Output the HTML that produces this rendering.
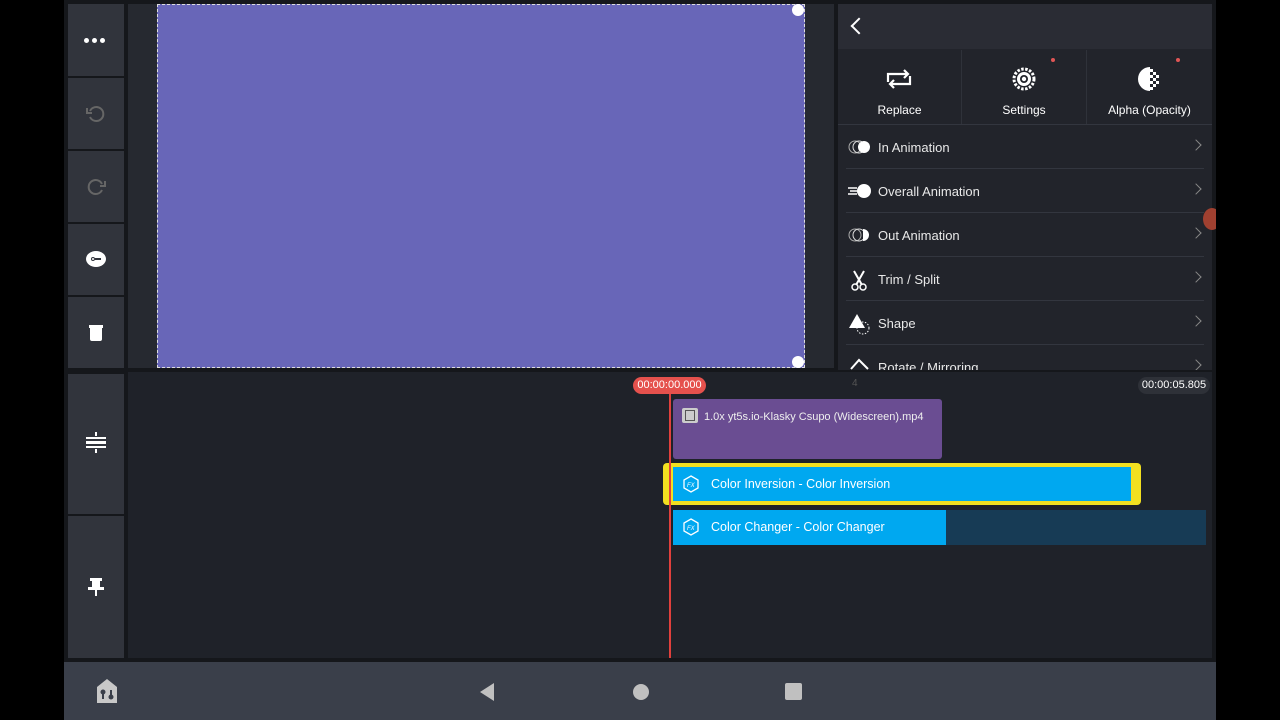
<!DOCTYPE html><html><head><style>
*{margin:0;padding:0;box-sizing:border-box}
body{width:1280px;height:720px;background:#000;position:relative;overflow:hidden;font-family:"Liberation Sans",sans-serif;color:#fff}
.a{position:absolute}
.tb{position:absolute;left:68px;width:56px;background:#31343c}
.row{position:absolute;left:838px;width:374px;height:44px;font-size:13px;color:#e8e8e8}
.row span{position:absolute;left:40px;top:15px}
.row i{position:absolute;right:12px;top:16px;width:8px;height:8px;border-right:1.5px solid #888;border-top:1.5px solid #888;transform:rotate(45deg)}
.row b{position:absolute;left:8px;right:8px;bottom:0;height:1px;background:#33363f}
</style></head><body>
<div class="a" style="left:64px;top:0;width:1152px;height:662px;background:#15171b"></div>
<div class="tb" style="top:4px;height:72px"><div class="a" style="left:16px;top:34px;font-size:0"><span style="display:inline-block;width:5px;height:5px;background:#fff;border-radius:50%;margin-right:3px"></span><span style="display:inline-block;width:5px;height:5px;background:#fff;border-radius:50%;margin-right:3px"></span><span style="display:inline-block;width:5px;height:5px;background:#fff;border-radius:50%"></span></div></div>
<div class="tb" style="top:78px;height:71px"><svg class="a" style="left:16px;top:24px" width="24" height="24" viewBox="0 0 24 24"><path d="M6 9a7 7 0 1 1 0 6" fill="none" stroke="#666" stroke-width="2"/><path d="M3 6v5h5" fill="none" stroke="#666" stroke-width="2"/></svg></div>
<div class="tb" style="top:151px;height:71px"><svg class="a" style="left:16px;top:24px" width="24" height="24" viewBox="0 0 24 24"><path d="M18 9a7 7 0 1 0 0 6" fill="none" stroke="#666" stroke-width="2"/><path d="M21 6v5h-5" fill="none" stroke="#666" stroke-width="2"/></svg></div>
<div class="tb" style="top:224px;height:71px"><div class="a" style="left:18px;top:27px;width:20px;height:16px;background:#fff;border-radius:50%"></div><div class="a" style="left:23px;top:33px;width:4px;height:4px;border:1.5px solid #31343c;border-radius:50%"></div><div class="a" style="left:27px;top:34px;width:6px;height:1.5px;background:#31343c"></div></div>
<div class="tb" style="top:297px;height:71px"><div class="a" style="left:21px;top:28px;width:14px;height:3px;background:#fff"></div><div class="a" style="left:22px;top:31px;width:12px;height:13px;background:#fff;border-radius:0 0 2px 2px"></div></div>
<div class="a" style="left:128px;top:4px;width:706px;height:364px;background:#262930"></div>
<div class="a" style="left:157px;top:4px;width:648px;height:364px;background:#6866b8;border:1px dashed #ddd"></div>
<div class="a" style="left:792px;top:4px;width:12px;height:12px;background:#fff;border-radius:50%"></div>
<div class="a" style="left:792px;top:356px;width:12px;height:12px;background:#fff;border-radius:50%"></div>
<div class="a" style="left:838px;top:4px;width:374px;height:366px;background:#22242b"></div>
<div class="a" style="left:838px;top:4px;width:374px;height:45px;background:#2a2c34"></div>
<div class="a" style="left:853px;top:20px;width:12px;height:12px;border-left:2px solid #fff;border-bottom:2px solid #fff;transform:rotate(45deg)"></div>
<div class="a" style="left:961px;top:50px;width:1px;height:74px;background:#2f323a"></div>
<div class="a" style="left:1086px;top:50px;width:1px;height:74px;background:#2f323a"></div>
<div class="a" style="left:838px;top:124px;width:374px;height:1px;background:#33363f"></div>
<svg class="a" style="left:884px;top:66px" width="30" height="26" viewBox="0 0 30 26"><path d="M4 16V8h20M20 4l4 4-4 4M26 10v8H6M10 22l-4-4 4-4" fill="none" stroke="#fff" stroke-width="2.2"/></svg>
<div class="a" style="left:838px;top:103px;width:123px;text-align:center;font-size:12px">Replace</div>
<svg class="a" style="left:1011px;top:66px" width="26" height="26" viewBox="0 0 26 26"><circle cx="13" cy="13" r="10" fill="none" stroke="#fff" stroke-width="3" stroke-dasharray="2.5 1.5"/><circle cx="13" cy="13" r="7" fill="#fff"/><circle cx="13" cy="13" r="4" fill="#22242b"/><circle cx="13" cy="13" r="2.2" fill="#fff"/></svg>
<div class="a" style="left:1051px;top:58px;width:4px;height:4px;border-radius:50%;background:#e05555"></div>
<div class="a" style="left:962px;top:103px;width:124px;text-align:center;font-size:12px">Settings</div>
<svg class="a" style="left:1137px;top:66px" width="26" height="26" viewBox="0 0 26 26"><path d="M13 1a12 12 0 0 0 0 24z" fill="#fff"/><g fill="#fff"><rect x="13" y="3" width="3" height="3"/><rect x="16" y="6" width="3" height="3"/><rect x="13" y="9" width="3" height="3"/><rect x="19" y="9" width="3" height="3"/><rect x="16" y="12" width="3" height="3"/><rect x="13" y="15" width="3" height="3"/><rect x="19" y="15" width="3" height="3"/><rect x="16" y="18" width="3" height="3"/><rect x="13" y="21" width="3" height="3"/></g></svg>
<div class="a" style="left:1176px;top:58px;width:4px;height:4px;border-radius:50%;background:#e05555"></div>
<div class="a" style="left:1087px;top:103px;width:125px;text-align:center;font-size:12px">Alpha (Opacity)</div>
<div class="row" style="top:125px"><svg class="a" style="left:10px;top:15px" width="24" height="14"><circle cx="7" cy="7" r="6" fill="none" stroke="#aaa"/><circle cx="11" cy="7" r="6" fill="none" stroke="#ddd"/><circle cx="16" cy="7" r="6" fill="#fff"/></svg><span>In Animation</span><i></i><b></b></div>
<div class="row" style="top:169px"><svg class="a" style="left:10px;top:14px" width="24" height="16"><path d="M0 5h9M2 8h8M0 11h9" stroke="#fff" stroke-width="1.5"/><circle cx="16" cy="8" r="7" fill="#fff"/></svg><span>Overall Animation</span><i></i><b></b></div>
<div class="row" style="top:213px"><svg class="a" style="left:10px;top:15px" width="24" height="14"><circle cx="7" cy="7" r="6" fill="none" stroke="#aaa"/><circle cx="11" cy="7" r="6" fill="none" stroke="#ddd"/><path d="M15 1a6 6 0 0 1 0 12z" fill="#fff"/></svg><span>Out Animation</span><i></i><b></b></div>
<div class="row" style="top:257px"><svg class="a" style="left:12px;top:12px" width="18" height="22"><path d="M4 2l8 14M14 2L6 16" stroke="#fff" stroke-width="2"/><circle cx="5" cy="18" r="3" fill="none" stroke="#fff" stroke-width="1.5"/><circle cx="13" cy="18" r="3" fill="none" stroke="#fff" stroke-width="1.5"/></svg><span>Trim / Split</span><i></i><b></b></div>
<div class="row" style="top:301px"><svg class="a" style="left:10px;top:12px" width="24" height="22"><path d="M9 1L1 15h16z" fill="#fff"/><circle cx="15" cy="15" r="6" fill="none" stroke="#fff" stroke-dasharray="1.5 1.5"/></svg><span>Shape</span><i></i><b></b></div>
<div class="row" style="top:345px;height:25px;overflow:hidden"><svg class="a" style="left:10px;top:12px" width="24" height="14"><path d="M3 12l8-9 9 9" fill="none" stroke="#fff" stroke-width="2"/></svg><span>Rotate / Mirroring</span><i></i></div>
<div class="a" style="left:1203px;top:208px;width:18px;height:22px;border-radius:50%;background:#a04030"></div>
<div class="a" style="left:1216px;top:0;width:64px;height:720px;background:#000"></div>
<div class="a" style="left:68px;top:374px;width:56px;height:140px;background:#31343c"></div>
<div class="a" style="left:68px;top:516px;width:56px;height:142px;background:#31343c"></div>
<div class="a" style="left:86px;top:437px;width:20px;height:2px;background:#fff"></div><div class="a" style="left:86px;top:441px;width:20px;height:3px;background:#fff"></div><div class="a" style="left:86px;top:446px;width:20px;height:2px;background:#fff"></div>
<div class="a" style="left:95px;top:432px;width:2px;height:4px;background:#fff"></div><div class="a" style="left:95px;top:449px;width:2px;height:4px;background:#fff"></div>
<div class="a" style="left:90px;top:578px;width:12px;height:3px;background:#fff"></div><div class="a" style="left:92px;top:581px;width:8px;height:7px;background:#fff"></div><div class="a" style="left:88px;top:587px;width:16px;height:3px;background:#fff"></div><div class="a" style="left:95px;top:590px;width:2px;height:6px;background:#fff"></div>
<div class="a" style="left:128px;top:372px;width:1084px;height:286px;background:#1f2229"></div>
<div class="a" style="left:633px;top:377px;width:73px;height:17px;background:#e5514d;border-radius:9px;font-size:11px;text-align:center;line-height:17px">00:00:00.000</div>
<div class="a" style="left:852px;top:378px;font-size:10px;color:#555">4</div>
<div class="a" style="left:1138px;top:377px;width:72px;height:17px;background:#2e3138;border-radius:9px;font-size:11px;text-align:center;line-height:17px">00:00:05.805</div>
<div class="a" style="left:673px;top:399px;width:269px;height:60px;background:#6a4d92;border-radius:3px"></div>
<div class="a" style="left:682px;top:408px;width:16px;height:15px;background:#ccc;border-radius:2px"></div><div class="a" style="left:685px;top:410px;width:10px;height:11px;border:1.5px solid #555"></div>
<div class="a" style="left:704px;top:411px;font-size:11px;color:#eee">1.0x yt5s.io-Klasky Csupo (Widescreen).mp4</div>
<div class="a" style="left:663px;top:463px;width:478px;height:42px;background:#f2e020;border-radius:4px"></div>
<div class="a" style="left:673px;top:467px;width:458px;height:34px;background:#00a8f0"></div>
<div class="a" style="left:673px;top:510px;width:273px;height:35px;background:#00a8f0"></div>
<div class="a" style="left:946px;top:510px;width:260px;height:35px;background:#173b55"></div>
<svg class="a" style="left:682px;top:475px" width="18" height="18"><path d="M9 1l7 4v8l-7 4-7-4V5z" fill="none" stroke="#fff" stroke-width="1.3"/><text x="5" y="12" font-size="6" fill="#fff" font-style="italic">FX</text></svg>
<div class="a" style="left:711px;top:477px;font-size:12.5px">Color Inversion - Color Inversion</div>
<svg class="a" style="left:682px;top:518px" width="18" height="18"><path d="M9 1l7 4v8l-7 4-7-4V5z" fill="none" stroke="#fff" stroke-width="1.3"/><text x="5" y="12" font-size="6" fill="#fff" font-style="italic">FX</text></svg>
<div class="a" style="left:711px;top:520px;font-size:12.5px">Color Changer - Color Changer</div>
<div class="a" style="left:669px;top:394px;width:2px;height:264px;background:#e0403c"></div>
<div class="a" style="left:64px;top:662px;width:1152px;height:58px;background:#3a3f4a"></div>
<svg class="a" style="left:95px;top:678px" width="24" height="26"><path d="M12 1L2 9v16h20V9z" fill="#c8c8c8"/><circle cx="8" cy="14" r="2.5" fill="#3a3f4a"/><circle cx="16" cy="19" r="2.5" fill="#3a3f4a"/><rect x="7" y="15" width="2" height="6" fill="#3a3f4a"/><rect x="15" y="12" width="2" height="6" fill="#3a3f4a"/></svg>
<svg class="a" style="left:478px;top:682px" width="18" height="20"><path d="M16 1v18L2 10z" fill="#c0c0c0"/></svg>
<div class="a" style="left:633px;top:684px;width:16px;height:16px;border-radius:50%;background:#c0c0c0"></div>
<div class="a" style="left:785px;top:683px;width:17px;height:17px;border-radius:2px;background:#c0c0c0"></div>
</body></html>
